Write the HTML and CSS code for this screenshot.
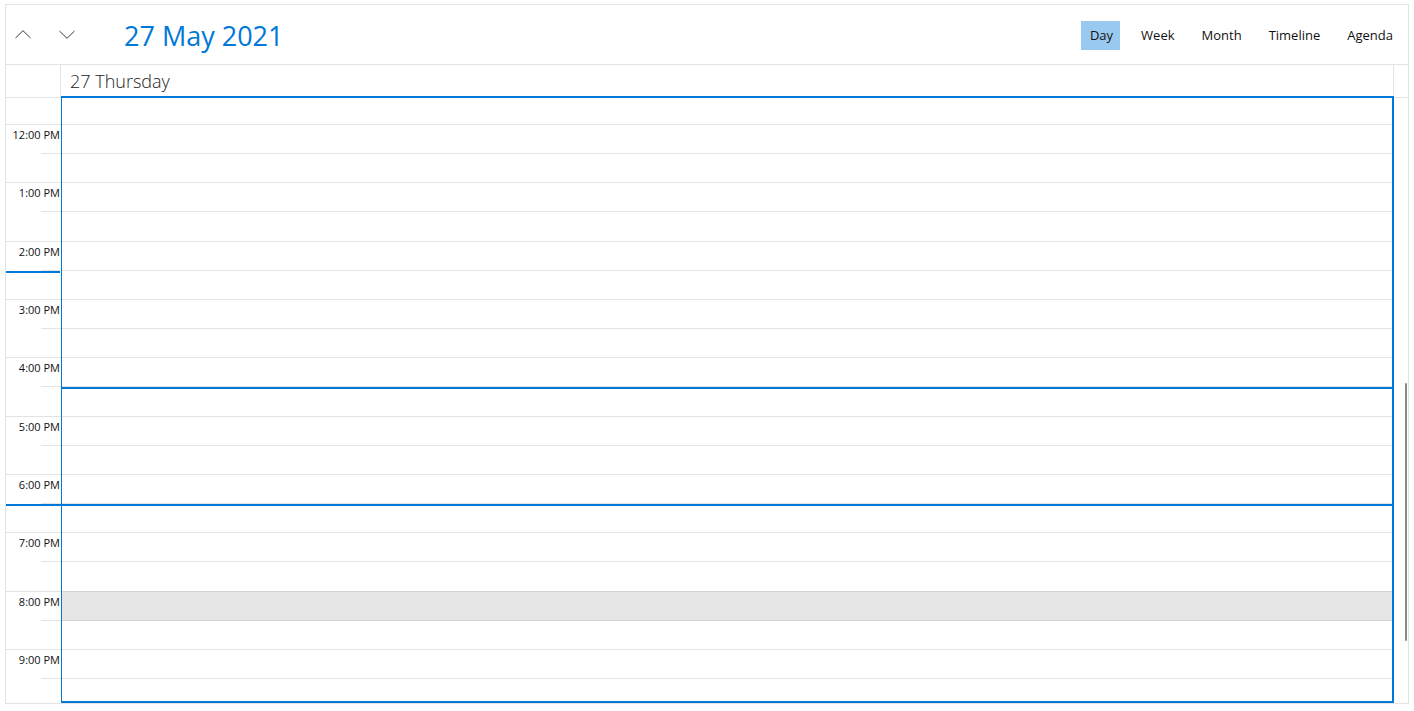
FILE: index.html
```html
<!DOCTYPE html>
<html lang="en">
<head>
<meta charset="utf-8">
<title>Scheduler - Day view</title>
<link rel="stylesheet" href="styles.css">
</head>
<body>
<div class="scheduler">
  <header class="toolbar">
    <button class="nav-btn nav-prev" aria-label="Previous">
      <svg width="16" height="9" viewBox="0 0 16 9"><polyline points="0.5,8 8,0.7 15.5,8" fill="none" stroke="#3a3a3a" stroke-width="1"/></svg>
    </button>
    <button class="nav-btn nav-next" aria-label="Next">
      <svg width="16" height="9" viewBox="0 0 16 9"><polyline points="0.5,1 8,8.3 15.5,1" fill="none" stroke="#3a3a3a" stroke-width="1"/></svg>
    </button>
    <h1 class="title">27 May 2021</h1>
    <nav class="views">
      <span class="view active">Day</span>
      <span class="view">Week</span>
      <span class="view">Month</span>
      <span class="view">Timeline</span>
      <span class="view">Agenda</span>
    </nav>
  </header>

  <div class="day-header">
    <div class="corner"></div>
    <div class="day-title">27 Thursday</div>
    <div class="lane"></div>
  </div>

  <div class="body">
    <div class="rows">
      <div class="row half"><div class="time"></div><div class="cell"></div><div class="lane"></div></div>
      <div class="row hour"><div class="time">12:00 PM</div><div class="cell"></div><div class="lane"></div></div>
      <div class="row half"><div class="time"></div><div class="cell"></div><div class="lane"></div></div>
      <div class="row hour"><div class="time">1:00 PM</div><div class="cell"></div><div class="lane"></div></div>
      <div class="row half"><div class="time"></div><div class="cell"></div><div class="lane"></div></div>
      <div class="row hour"><div class="time">2:00 PM</div><div class="cell"></div><div class="lane"></div></div>
      <div class="row half"><div class="time"></div><div class="cell"></div><div class="lane"></div></div>
      <div class="row hour"><div class="time">3:00 PM</div><div class="cell"></div><div class="lane"></div></div>
      <div class="row half"><div class="time"></div><div class="cell"></div><div class="lane"></div></div>
      <div class="row hour"><div class="time">4:00 PM</div><div class="cell"></div><div class="lane"></div></div>
      <div class="row half"><div class="time"></div><div class="cell"></div><div class="lane"></div></div>
      <div class="row hour"><div class="time">5:00 PM</div><div class="cell"></div><div class="lane"></div></div>
      <div class="row half"><div class="time"></div><div class="cell"></div><div class="lane"></div></div>
      <div class="row hour"><div class="time">6:00 PM</div><div class="cell"></div><div class="lane"></div></div>
      <div class="row half"><div class="time"></div><div class="cell"></div><div class="lane"></div></div>
      <div class="row hour"><div class="time">7:00 PM</div><div class="cell"></div><div class="lane"></div></div>
      <div class="row half"><div class="time"></div><div class="cell"></div><div class="lane"></div></div>
      <div class="row hour"><div class="time">8:00 PM</div><div class="cell shaded"></div><div class="lane"></div></div>
      <div class="row half after-shaded"><div class="time"></div><div class="cell"></div><div class="lane"></div></div>
      <div class="row hour"><div class="time">9:00 PM</div><div class="cell"></div><div class="lane"></div></div>
      <div class="row half"><div class="time"></div><div class="cell"></div><div class="lane"></div></div>
    </div>
  </div>

  <div class="selection"></div>
  <div class="now-marker"></div>
  <div class="blue-line line-a"></div>
  <div class="blue-line line-b"></div>
  <div class="scroll-thumb"></div>
</div>
</body>
</html>
```

FILE: styles.css
```css
* { box-sizing: border-box; }

html, body {
  margin: 0;
  padding: 0;
  background: #ffffff;
}

body {
  font-family: "Open Sans", "Noto Sans", sans-serif;
  color: #1a1a1a;
}

.scheduler {
  position: relative;
  margin: 4px 0 0 5px;
  width: 1404px;
  height: 700px;
  border: 1px solid #e3e3e3;
  display: flex;
  flex-direction: column;
  background: #fff;
}

/* ---------- toolbar ---------- */
.toolbar {
  height: 60px;
  flex: none;
  display: flex;
  align-items: center;
  border-bottom: 1px solid #e3e3e3;
  padding: 0 7px 0 1px;
}

.nav-btn {
  width: 32px;
  height: 32px;
  padding: 0;
  border: 0;
  background: transparent;
  display: flex;
  align-items: center;
  justify-content: center;
}

.nav-next { margin-left: 12px; }

.title {
  margin: 2px 0 0 41px;
  font-weight: 400;
  font-size: 27px;
  line-height: 36px;
  color: #0078d7;
  flex: 1;
}

.views {
  display: flex;
  align-items: center;
  gap: 11px;
}

.view {
  height: 29px;
  padding: 0 8px;
  display: flex;
  align-items: center;
  font-size: 13px;
  color: #111;
  margin-top: 1px;
}

.view.active {
  background: #99c9ef;
  padding: 0 7px 0 9px;
  margin-right: 2px;
}

/* ---------- day header ---------- */
.day-header {
  flex: none;
  height: 33px;
  display: grid;
  grid-template-columns: 55px 1333px 14px;
  border-bottom: 1px solid #e3e3e3;
}

.corner {
  border-right: 1px solid #e3e3e3;
}

.day-title {
  border-right: 1px solid #e3e3e3;
  padding: 4px 0 0 9px;
  font-size: 18px;
  font-weight: 300;
  line-height: 24px;
  color: #222;
}

/* ---------- body ---------- */
.body {
  flex: 1;
  overflow: hidden;
}

.rows {
  margin-top: -3.1667px;
}

.row {
  height: 29.1667px;
  display: grid;
  grid-template-columns: 55px 1333px 14px;
}

.time {
  font-size: 11px;
  line-height: 15px;
  text-align: right;
  padding: 2px 1px 0 0;
  color: #111;
  white-space: nowrap;
}

.row.hour .time {
  border-top: 1px solid #e3e3e3;
}

.row.half .time {
  background: linear-gradient(#e3e3e3, #e3e3e3) right top / 20px 1px no-repeat;
}

.cell {
  border-top: 1px solid #e3e3e3;
}

.cell.shaded {
  background: #e6e6e6;
  border-top-color: #d3d3d3;
}

.row.after-shaded .cell {
  border-top-color: #d3d3d3;
}

/* ---------- overlays ---------- */
.selection {
  position: absolute;
  left: 55px;
  top: 91px;
  width: 1333px;
  height: 607px;
  border: 2px solid #0078d7;
  border-left-width: 1px;
  pointer-events: none;
}

.now-marker {
  position: absolute;
  left: 0;
  top: 266px;
  width: 54px;
  height: 2px;
  background: #0078d7;
}

.blue-line {
  position: absolute;
  height: 2px;
  background: #0078d7;
}

.line-a {
  left: 55px;
  top: 382px;
  width: 1333px;
}

.line-b {
  left: 0;
  top: 499px;
  width: 1388px;
}

.scroll-thumb {
  position: absolute;
  left: 1399px;
  top: 378px;
  width: 2px;
  height: 258px;
  background: #8a8a8a;
  border-radius: 1px;
}
```
